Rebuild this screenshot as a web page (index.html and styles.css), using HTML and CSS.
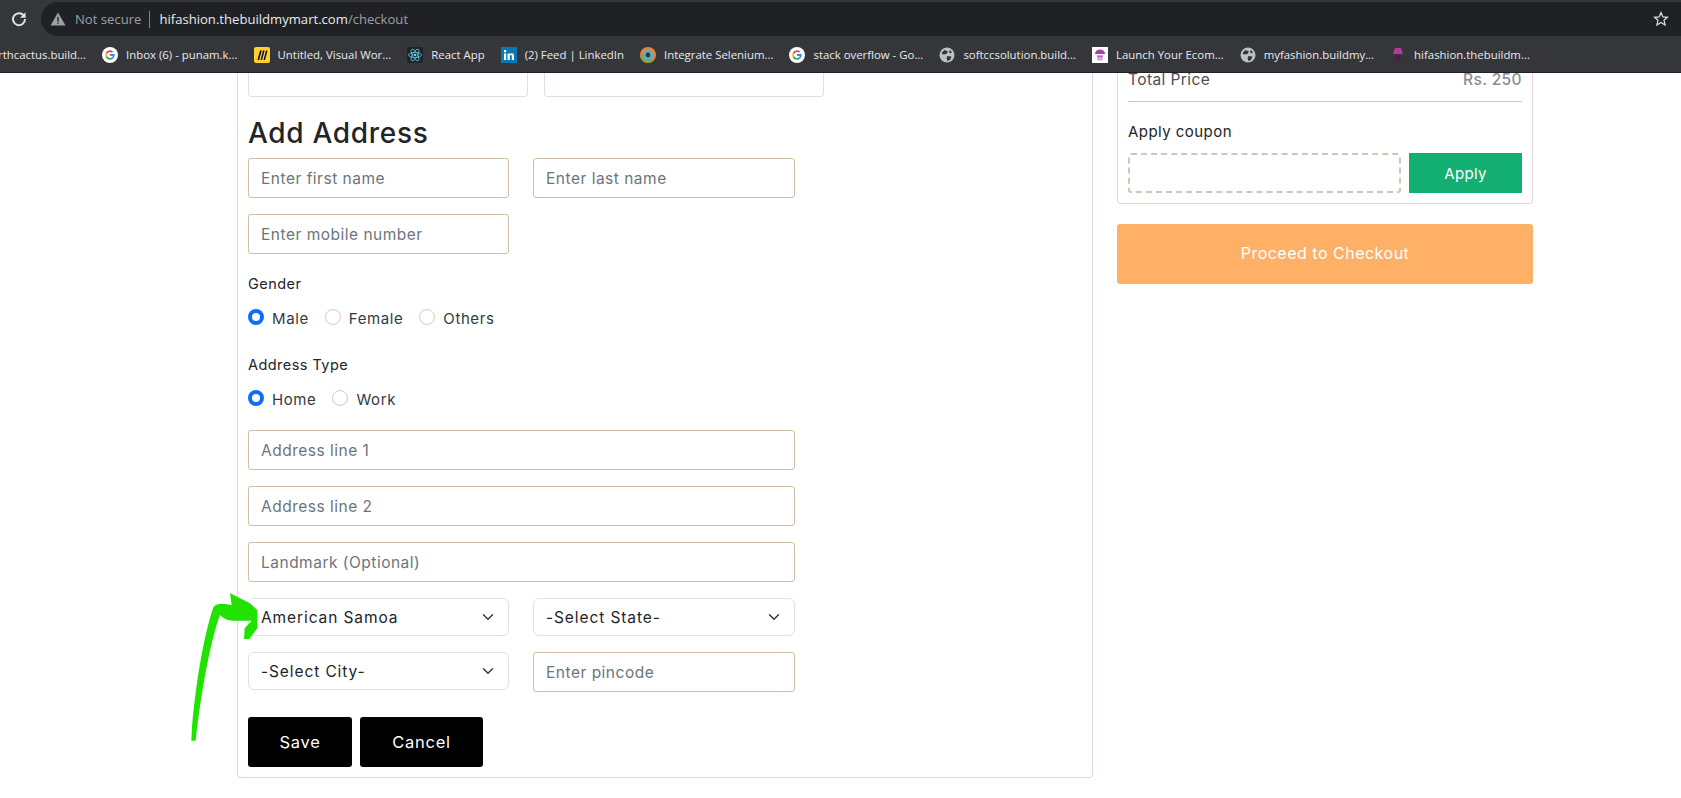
FILE: index.html
```html
<!DOCTYPE html>
<html lang="en">
<head>
    <meta charset="UTF-8">
    <title>Checkout</title>
    <link rel="stylesheet" href="styles.css">
</head>
<body>

    <div class="chrome">
        <div class="toolbar">
            <svg class="reload" viewBox="0 0 16 16"><path d="M13.2 5.2A6 6 0 1 0 14 8" fill="none" stroke="#dfe1e5" stroke-width="2"/><path d="M14.6 1.2v5.6H9z" fill="#dfe1e5"/></svg>
            <div class="omnibox">
                <svg class="warn" viewBox="0 0 16 16"><path d="M8 1.5 15.5 14.5H.5z" fill="#9aa0a6"/><path d="M7.3 6h1.4v4.6H7.3zM7.3 11.4h1.4v1.4H7.3z" fill="#202124"/></svg>
                <span class="not-secure">Not secure</span>
                <span class="omni-sep"></span>
                <span class="url">hifashion.thebuildmymart.com<span class="url-path">/checkout</span></span>
                <svg class="star" viewBox="0 0 16 16"><path d="M8 1.6l1.9 4.3 4.6.4-3.5 3 1.1 4.6L8 11.5l-4.1 2.4L5 9.3l-3.5-3 4.6-.4z" fill="none" stroke="#dfe1e5" stroke-width="1.2"/></svg>
            </div>
        </div>
        <div class="bookmarks">
            <span class="bm bm-first"><span class="bm-text">rthcactus.build...</span></span>
            <span class="bm"><svg viewBox="0 0 16 16"><circle cx="8" cy="8" r="8" fill="#fff"/><path d="M8 3.2a4.8 4.8 0 0 1 3.2 1.2l-1.2 1.2A3 3 0 0 0 5.2 7L3.7 5.8A4.8 4.8 0 0 1 8 3.2z" fill="#ea4335"/><path d="M3.7 5.8 5.2 7a3 3 0 0 0 0 2L3.7 10.2a4.8 4.8 0 0 1 0-4.4z" fill="#fbbc05"/><path d="M3.7 10.2 5.2 9A3 3 0 0 0 10 10.3l1.4 1.1A4.8 4.8 0 0 1 3.7 10.2z" fill="#34a853"/><path d="M12.7 7H8v1.9h2.7a2.3 2.3 0 0 1-.7 1.4l1.4 1.1A4.8 4.8 0 0 0 12.7 7z" fill="#4285f4"/></svg><span class="bm-text">Inbox (6) - punam.k...</span></span>
            <span class="bm"><svg viewBox="0 0 16 16"><rect width="16" height="16" rx="2" fill="#ffd02f"/><path d="M3.5 13 6 3.5h1.8L5 13zM6.5 13 9 3.5h1.6L8 13zM9.500 13 12 3.500h1.500L11 13z" fill="#050038"/></svg><span class="bm-text">Untitled, Visual Wor...</span></span>
            <span class="bm"><svg viewBox="0 0 16 16"><rect width="16" height="16" rx="2" fill="#20232a"/><g fill="none" stroke="#61dafb" stroke-width=".7"><ellipse cx="8" cy="8" rx="6.5" ry="2.6"/><ellipse cx="8" cy="8" rx="6.5" ry="2.6" transform="rotate(60 8 8)"/><ellipse cx="8" cy="8" rx="6.5" ry="2.6" transform="rotate(120 8 8)"/></g><circle cx="8" cy="8" r="1.3" fill="#61dafb"/></svg><span class="bm-text">React App</span></span>
            <span class="bm"><svg viewBox="0 0 16 16"><rect width="16" height="16" fill="#0a78b5"/><path d="M3 6.5h2.200V13H3zM3 3h2.200v2.200H3zM6.600 6.500h2.100v.9c.4-.7 1.100-1.100 2-1.100 1.700 0 2.300 1.100 2.300 2.800V13h-2.200V9.500c0-.8-.2-1.400-1-1.400s-1 .6-1 1.400V13H6.600z" fill="#fff"/></svg><span class="bm-text">(2) Feed | LinkedIn</span></span>
            <span class="bm"><svg viewBox="0 0 16 16"><circle cx="8" cy="8" r="8" fill="#e8833a"/><path d="M0 8a8 8 0 0 0 8 8 8 8 0 0 0 6-3L8 8z" fill="#7fa84a"/><circle cx="8" cy="8" r="5" fill="#4fb3d9"/><circle cx="8" cy="8" r="2.4" fill="#33373a"/></svg><span class="bm-text">Integrate Selenium...</span></span>
            <span class="bm"><svg viewBox="0 0 16 16"><circle cx="8" cy="8" r="8" fill="#fff"/><path d="M8 3.2a4.8 4.8 0 0 1 3.2 1.2l-1.2 1.2A3 3 0 0 0 5.2 7L3.7 5.8A4.8 4.8 0 0 1 8 3.2z" fill="#ea4335"/><path d="M3.7 5.8 5.2 7a3 3 0 0 0 0 2L3.7 10.2a4.8 4.8 0 0 1 0-4.4z" fill="#fbbc05"/><path d="M3.7 10.2 5.2 9A3 3 0 0 0 10 10.3l1.4 1.1A4.8 4.8 0 0 1 3.7 10.2z" fill="#34a853"/><path d="M12.7 7H8v1.9h2.7a2.3 2.3 0 0 1-.7 1.4l1.4 1.1A4.8 4.8 0 0 0 12.7 7z" fill="#4285f4"/></svg><span class="bm-text">stack overflow - Go...</span></span>
            <span class="bm"><svg viewBox="0 0 16 16"><circle cx="8" cy="8" r="7.5" fill="#bdc1c6"/><path d="M5.500 3 9 4.500 7.500 7 4 7.500 2.500 6zM8.500 9l4 .5-1.500 3.500-2.500 1L7.500 11zM11 3l2 2.500-2 1-1-2z" fill="#35363a"/></svg><span class="bm-text">softccsolution.build...</span></span>
            <span class="bm"><svg viewBox="0 0 16 16"><rect width="16" height="16" fill="#fff"/><path d="M3 7a5 4.5 0 0 1 10 0z" fill="#b03aa6"/><path d="M4.5 8h7l-1 5.5h-5z" fill="#d9a3d8"/><path d="M6 9.5h1.500M8.500 9.500H10" stroke="#a53aa0"/></svg><span class="bm-text">Launch Your Ecom...</span></span>
            <span class="bm"><svg viewBox="0 0 16 16"><circle cx="8" cy="8" r="7.5" fill="#bdc1c6"/><path d="M5.500 3 9 4.500 7.500 7 4 7.500 2.500 6zM8.500 9l4 .5-1.500 3.500-2.500 1L7.500 11zM11 3l2 2.500-2 1-1-2z" fill="#35363a"/></svg><span class="bm-text">myfashion.buildmy...</span></span>
            <span class="bm"><svg viewBox="0 0 16 16"><path d="M3 7 5 1h6l2 6z" fill="#b23a9b"/><path d="M5 8h6l-1 7H6z" fill="#4a2146"/></svg><span class="bm-text">hifashion.thebuildm...</span></span>
        </div>
    </div>

    <div class="page">
        <div class="left-card">
            <div class="row">
                <div class="stub"></div>
                <div class="stub"></div>
            </div>

            <h2 class="title">Add Address</h2>

            <div class="fields">
                <div class="cols">
                    <input class="field" placeholder="Enter first name">
                    <input class="field" placeholder="Enter last name">
                </div>
                <div class="cols">
                    <input class="field" placeholder="Enter mobile number">
                    <div></div>
                </div>
            </div>

            <div class="label gender-label">Gender</div>
            <div class="radios">
                <label class="radio"><span class="dot on"></span>Male</label>
                <label class="radio"><span class="dot"></span>Female</label>
                <label class="radio"><span class="dot"></span>Others</label>
            </div>

            <div class="label type-label">Address Type</div>
            <div class="radios">
                <label class="radio"><span class="dot on"></span>Home</label>
                <label class="radio"><span class="dot"></span>Work</label>
            </div>

            <div class="fields address">
                <input class="field" placeholder="Address line 1">
                <input class="field" placeholder="Address line 2">
                <input class="field" placeholder="Landmark (Optional)">
                <div class="cols">
                    <div class="select">American Samoa<svg viewBox="0 0 16 16"><path d="M2 5l6 6 6-6" fill="none" stroke="#343a40" stroke-width="2" stroke-linecap="round" stroke-linejoin="round"/></svg></div>
                    <div class="select">-Select State-<svg viewBox="0 0 16 16"><path d="M2 5l6 6 6-6" fill="none" stroke="#343a40" stroke-width="2" stroke-linecap="round" stroke-linejoin="round"/></svg></div>
                </div>
                <div class="cols">
                    <div class="select">-Select City-<svg viewBox="0 0 16 16"><path d="M2 5l6 6 6-6" fill="none" stroke="#343a40" stroke-width="2" stroke-linecap="round" stroke-linejoin="round"/></svg></div>
                    <input class="field" placeholder="Enter pincode">
                </div>
            </div>

            <div class="actions">
                <button class="black-btn save">Save</button>
                <button class="black-btn cancel">Cancel</button>
            </div>
        </div>

        <div class="right-col">
            <div class="summary">
                <div class="total">
                    <span>Total Price</span>
                    <span class="price">Rs. 250</span>
                </div>
                <div class="coupon-title">Apply coupon</div>
                <div class="coupon">
                    <div class="coupon-input"></div>
                    <button class="apply">Apply</button>
                </div>
            </div>
            <button class="checkout">Proceed to Checkout</button>
        </div>
    </div>

    <svg class="arrow" viewBox="0 0 1080 684"><path d="M64 512 66 470C78 340 100 200 130 112Q140 98 165 102L185 105 180 70 240 100 262 120V175L238 207H222L224 175 245 152H190Q165 152 150 135C125 200 95 350 77 512Z" fill="#21e200"/></svg>

</body>
</html>
```

FILE: styles.css
```css
*{
    box-sizing: border-box;
}

body{
    margin: 0;
    height: 798px;
    overflow: hidden;
    background: #fff;
    font-family: Inter, "Open Sans", sans-serif;
    color: #212529;
    position: relative;
}

/* browser bar */
.chrome{
    height: 73px;
    background: #35363a;
    border-bottom: 1px solid #202124;
    font-family: "Open Sans", "Liberation Sans", sans-serif;
}
.toolbar{
    height: 37px;
    padding: 2px 0 0 11px;
    display: flex;
    align-items: flex-start;
    gap: 14px;
}
.reload{
    width: 16px;
    height: 16px;
    margin-top: 9px;
    flex: none;
}
.omnibox{
    flex: 1;
    height: 34px;
    background: #202124;
    border-radius: 17px 0 0 17px;
    display: flex;
    align-items: center;
    padding: 0 12px 0 9px;
    font-size: 13.1px;
}
.warn{
    width: 16px;
    height: 16px;
    flex: none;
}
.not-secure{
    color: #9aa0a6;
    margin-left: 9px;
}
.omni-sep{
    width: 1px;
    height: 17px;
    background: #80868b;
    margin: 0 9px 0 8px;
}
.url{
    color: #e8eaed;
    flex: 1;
}
.url-path{
    color: #9aa0a6;
}
.star{
    width: 16px;
    height: 16px;
}
.bookmarks{
    height: 35px;
    display: flex;
    align-items: center;
    font-size: 11.4px;
    color: #e8eaed;
    white-space: nowrap;
    overflow: hidden;
}
.bm{
    display: flex;
    align-items: center;
    gap: 8px;
    margin-right: 16px;
}
.bm svg{
    width: 16px;
    height: 16px;
    flex: none;
}
.bm-first{
    margin-left: -2px;
}

/* page */
.page{
    display: flex;
    align-items: flex-start;
    padding-left: 237px;
    gap: 24px;
}
.left-card{
    width: 856px;
    height: 705px;
    border: 1px solid #e3d9d9;
    border-top: none;
    border-radius: 0 0 4px 4px;
    padding: 0 10px;
}
.row{
    display: flex;
    gap: 16px;
}
.stub{
    width: 280px;
    height: 24px;
    border: 1px solid #e8dcdc;
    border-top: none;
    border-radius: 0 0 4px 4px;
}
.title{
    margin: 15px 0 0;
    font-size: 28px;
    line-height: 42px;
    font-weight: 500;
    letter-spacing: .7px;
}
.fields{
    display: flex;
    flex-direction: column;
    gap: 16px;
    width: 547px;
    margin-top: 4px;
}
.cols{
    display: grid;
    grid-template-columns: 261px 262px;
    column-gap: 24px;
    height: 40px;
}
.field{
    height: 40px;
    width: 100%;
    border: 1px solid #cdbfa8;
    border-radius: 3px;
    padding: 0 12px;
    font-family: inherit;
    font-size: 15.5px;
    letter-spacing: .5px;
    background: #fff;
    outline: none;
}
.field::placeholder{
    color: #6c757d;
    opacity: 1;
}
.label{
    font-size: 14.5px;
    line-height: 22px;
    letter-spacing: .45px;
}
.gender-label{
    margin-top: 19px;
}
.type-label{
    margin-top: 24px;
}
.radios{
    display: flex;
    gap: 16px;
    margin-top: 11px;
    height: 24px;
}
.radio{
    display: flex;
    align-items: center;
    gap: 8px;
    font-size: 15px;
    letter-spacing: .6px;
    color: #343a40;
}
.dot{
    width: 16px;
    height: 16px;
    border-radius: 50%;
    border: 1px solid #d3cabc;
    background: #fff;
    margin-top: -2px;
}
.dot.on{
    border: 4.5px solid #0d6efd;
}
.address{
    margin-top: 19px;
}
.address .cols{
    height: 38px;
}
.select{
    height: 38px;
    border: 1px solid #dee2e6;
    border-radius: 6px;
    padding: 0 14px 0 12px;
    display: flex;
    align-items: center;
    justify-content: space-between;
    font-size: 15.5px;
    letter-spacing: .9px;
}
.select svg{
    width: 12px;
    height: 12px;
}
.actions{
    display: flex;
    gap: 8px;
    margin-top: 27px;
}
.black-btn{
    height: 50px;
    background: #000;
    color: #fff;
    border: none;
    border-radius: 3px;
    font-family: inherit;
    font-size: 16.5px;
    font-weight: 400;
    letter-spacing: .7px;
    padding: 0;
}
.save{
    width: 104px;
}
.cancel{
    width: 123px;
}

/* right column */
.right-col{
    width: 416px;
}
.summary{
    height: 131px;
    border: 1px solid #e3d9d9;
    border-top: none;
    border-radius: 0 0 4px 4px;
    padding: 0 10px;
}
.total{
    display: flex;
    justify-content: space-between;
    height: 29px;
    line-height: 13px;
    border-bottom: 1px solid #cfc6bb;
    font-size: 15.5px;
    letter-spacing: .4px;
    color: #495057;
    align-items: flex-start;
}
.price{
    color: #868e96;
    font-weight: 500;
}
.coupon-title{
    margin-top: 19px;
    font-size: 15px;
    line-height: 22px;
    letter-spacing: .45px;
}
.coupon{
    display: flex;
    gap: 8px;
    margin-top: 10px;
}
.coupon-input{
    width: 273px;
    height: 40px;
    border: 2px dashed #cfc6b6;
    border-radius: 3px;
}
.apply{
    width: 113px;
    height: 40px;
    border: none;
    background: #13ae72;
    color: #fff;
    font-family: inherit;
    font-size: 15px;
    letter-spacing: .3px;
}
.checkout{
    display: block;
    width: 100%;
    height: 60px;
    margin-top: 20px;
    padding-bottom: 4px;
    border: none;
    border-radius: 3px;
    background: #ffb067;
    color: #fff;
    font-family: inherit;
    font-size: 16px;
    letter-spacing: .5px;
}

/* green marker arrow drawn over the screenshot */
.arrow{
    position: absolute;
    left: 170px;
    top: 570px;
    width: 360px;
    height: 228px;
}
```
